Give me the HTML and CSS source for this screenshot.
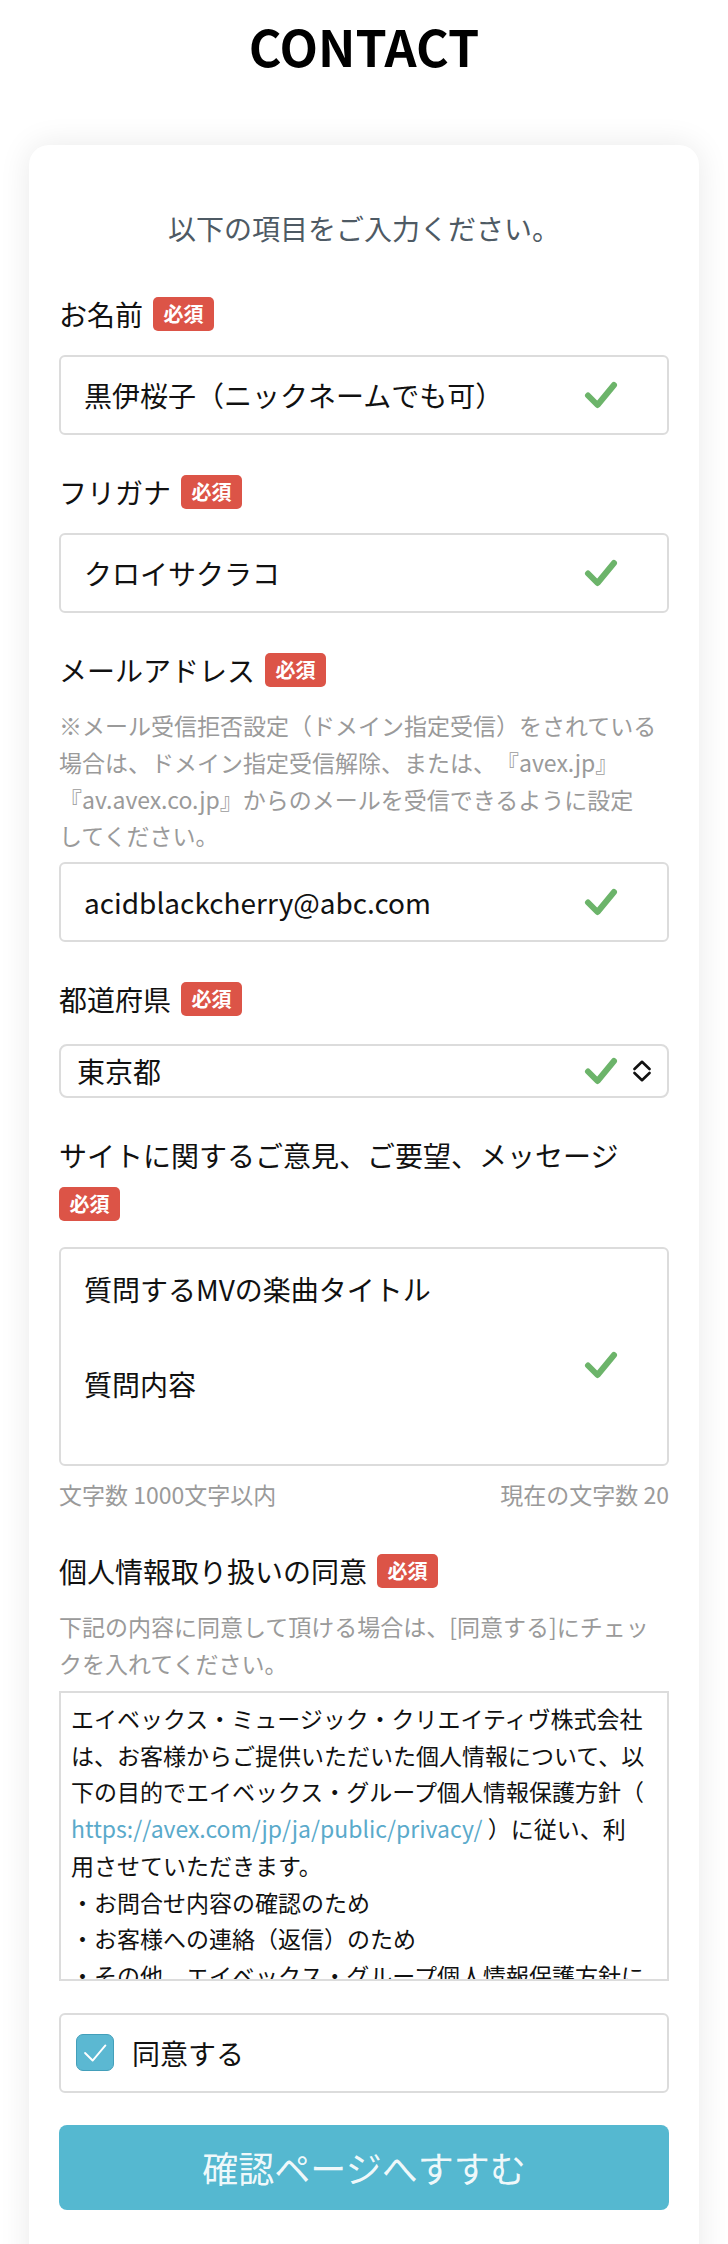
FILE: index.html
```html
<!DOCTYPE html>
<html lang="ja">
<head>
<meta charset="utf-8">
<title>CONTACT</title>
<link rel="stylesheet" href="styles.css">
</head>
<body>
<h1 class="title">CONTACT</h1>
<main class="card">
  <p class="intro">以下の項目をご入力ください。</p>

  <div class="field">
    <div class="label"><span>お名前</span><span class="req">必須</span></div>
    <div class="box"><span class="value">黒伊桜子（ニックネームでも可）</span><svg class="ok" viewBox="0 0 34 28"><path d="M4 14.5 L13.5 24 L30 4"/></svg></div>
  </div>

  <div class="field">
    <div class="label"><span>フリガナ</span><span class="req">必須</span></div>
    <div class="box"><span class="value">クロイサクラコ</span><svg class="ok" viewBox="0 0 34 28"><path d="M4 14.5 L13.5 24 L30 4"/></svg></div>
  </div>

  <div class="field">
    <div class="label"><span>メールアドレス</span><span class="req">必須</span></div>
    <p class="note">※メール受信拒否設定（ドメイン指定受信）をされている場合は、ドメイン指定受信解除、または、『avex.jp』『av.avex.co.jp』からのメールを受信できるように設定<br>してください。</p>
    <div class="box"><span class="value">acidblackcherry@abc.com</span><svg class="ok" viewBox="0 0 34 28"><path d="M4 14.5 L13.5 24 L30 4"/></svg></div>
  </div>

  <div class="field field--select">
    <div class="label"><span>都道府県</span><span class="req">必須</span></div>
    <div class="box box--select"><span class="value">東京都</span><svg class="ok" viewBox="0 0 34 28"><path d="M4 14.5 L13.5 24 L30 4"/></svg><svg class="updown" viewBox="0 0 20 22"><path d="M2.5 9 L10 1.8 L17.5 9 M2.5 13 L10 20.2 L17.5 13"/></svg></div>
  </div>

  <div class="field field--area">
    <div class="label label--wrap"><span>サイトに関するご意見、ご要望、メッセージ</span><span class="req">必須</span></div>
    <div class="box box--area"><span class="value">質問するMVの楽曲タイトル<br><br>質問内容</span><svg class="ok" viewBox="0 0 34 28"><path d="M4 14.5 L13.5 24 L30 4"/></svg></div>
    <div class="counter"><span>文字数 1000文字以内</span><span>現在の文字数 20</span></div>
  </div>

  <div class="field field--terms">
    <div class="label"><span>個人情報取り扱いの同意</span><span class="req">必須</span></div>
    <p class="note note--terms">下記の内容に同意して頂ける場合は、[同意する]にチェックを入れてください。</p>
    <div class="terms">エイベックス・ミュージック・クリエイティヴ株式会社<br>は、お客様からご提供いただいた個人情報について、以<br>下の目的でエイベックス・グループ個人情報保護方針（<br><a class="link" href="#">https://avex.com/jp/ja/public/privacy/</a> ）に従い、利<br>用させていただきます。<br>・お問合せ内容の確認のため<br>・お客様への連絡（返信）のため<br>・その他、エイベックス・グループ個人情報保護方針に</div>
  </div>

  <div class="agree">
    <span class="checkbox"><svg viewBox="0 0 38 37"><path d="M8.5 19 L16.5 27 L30 11"/></svg></span>
    <span>同意する</span>
  </div>

  <div class="submit">確認ページへすすむ</div>
</main>
</body>
</html>
```

FILE: styles.css
```css
html, body {
  margin: 0;
  padding: 0;
  background: #fff;
}

body {
  font-family: "Noto Sans CJK JP", "Noto Sans", sans-serif;
  color: #111;
  text-spacing-trim: space-all;
}

.title {
  margin: 0;
  padding-top: 15px;
  font-size: 50px;
  line-height: 60px;
  font-weight: 700;
  text-align: center;
  color: #000;
}

.card {
  margin: 70px 29px 0;
  padding: 63px 30px 80px;
  background: #fff;
  border-radius: 20px;
  box-shadow: 0 0 32px rgba(0, 0, 0, 0.09);
}

.intro {
  margin: 0 0 46px;
  font-size: 28px;
  line-height: 40px;
  text-align: center;
  color: #4e5a64;
}

.field {
  margin-bottom: 37px;
}

.label {
  display: flex;
  flex-wrap: wrap;
  align-items: center;
  column-gap: 10px;
  row-gap: 12px;
  margin-bottom: 21px;
  font-size: 28px;
  line-height: 40px;
  color: #111;
}

.field--select .label {
  margin-bottom: 25px;
}

.label--wrap {
  margin-bottom: 26px;
}

.req {
  height: 34px;
  padding: 0 10.5px;
  border-radius: 5px;
  background: #dc5447;
  color: #fff;
  font-size: 20px;
  line-height: 34px;
  font-weight: 700;
}

.note {
  margin: -4px 0 8px;
  font-size: 23px;
  line-height: 36.8px;
  color: #9a9a9a;
}

.note--terms {
  margin-bottom: 9px;
}

.box {
  display: flex;
  align-items: center;
  box-sizing: border-box;
  height: 80px;
  padding: 0 49px 0 23px;
  border: 2px solid #dcdcdc;
  border-radius: 6px;
  font-size: 28px;
  line-height: 40px;
  color: #111;
}

.value {
  flex: 1;
  white-space: nowrap;
}

.ok {
  width: 34px;
  height: 28px;
  flex: none;
}

.ok path {
  fill: none;
  stroke: #6cb46a;
  stroke-width: 6;
  stroke-linecap: round;
  stroke-linejoin: round;
}

.box--select {
  height: 54px;
  padding: 0 15px 0 16px;
  border-radius: 8px;
}

.updown {
  width: 20px;
  height: 22px;
  margin-left: 14px;
  flex: none;
}

.updown path {
  fill: none;
  stroke: #111;
  stroke-width: 2.6;
  stroke-linecap: round;
  stroke-linejoin: round;
}

.box--area {
  height: 219px;
  padding-top: 17px;
}

.box--area .value {
  align-self: flex-start;
  line-height: 47.5px;
}

.field--area {
  margin-bottom: 42px;
}

.counter {
  display: flex;
  justify-content: space-between;
  margin-top: 13px;
  font-size: 23px;
  line-height: 30px;
  color: #9a9a9a;
}

.field--terms {
  margin-bottom: 32px;
}

.terms {
  box-sizing: border-box;
  height: 290px;
  overflow: hidden;
  padding: 7px 10px 0;
  border: 2px solid #dcdcdc;
  font-size: 23px;
  line-height: 36.75px;
  white-space: nowrap;
  color: #111;
}

.link {
  color: #5aaacb;
  text-decoration: none;
}

.agree {
  display: flex;
  align-items: center;
  gap: 18px;
  box-sizing: border-box;
  height: 80px;
  margin-bottom: 32px;
  padding-left: 15px;
  border: 2px solid #dcdcdc;
  border-radius: 6px;
  font-size: 28px;
  line-height: 40px;
  color: #111;
}

.checkbox {
  display: flex;
  box-sizing: border-box;
  width: 38px;
  height: 37px;
  border: 1.5px solid #439fba;
  border-radius: 7px;
  background: #5bb8d2;
}

.checkbox svg {
  width: 100%;
  height: 100%;
}

.checkbox path {
  fill: none;
  stroke: #fff;
  stroke-width: 2;
  stroke-linecap: round;
  stroke-linejoin: round;
}

.submit {
  display: flex;
  align-items: center;
  justify-content: center;
  height: 85px;
  border-radius: 8px;
  background: #55b8d0;
  color: rgba(255, 255, 255, 0.93);
  font-size: 36px;
  line-height: 48px;
}
```
